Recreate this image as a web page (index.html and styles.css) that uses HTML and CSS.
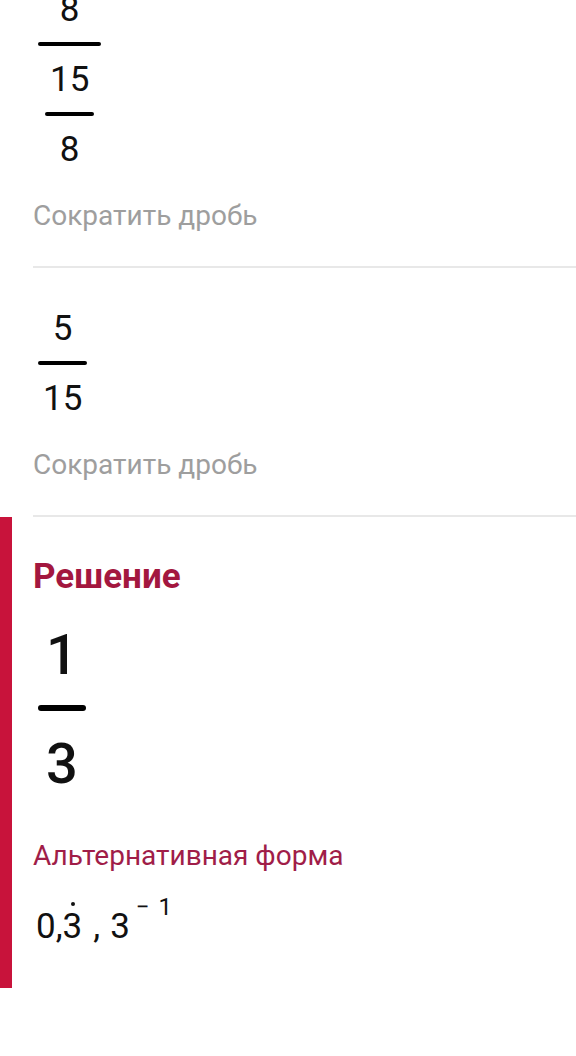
FILE: index.html
```html
<!DOCTYPE html>
<html lang="ru">
<head>
  <meta charset="UTF-8" />
  <meta name="viewport" content="width=device-width, initial-scale=1.0" />
  <title>Решение</title>
  <link rel="stylesheet" href="styles.css">
</head>
<body>
  <div id="feed">
    <!-- Step: (5/8) / (15/8) -->
    <div class="step">
      <div class="expr">
        <span class="frac">
          <span class="num">
            <span class="frac">
              <span class="num">5</span>
              <span class="bar"></span>
              <span class="den">8</span>
            </span>
          </span>
          <span class="bar"></span>
          <span class="den">
            <span class="frac">
              <span class="num">15</span>
              <span class="bar"></span>
              <span class="den">8</span>
            </span>
          </span>
        </span>
      </div>
      <p class="caption">Сократить дробь</p>
    </div>

    <!-- Step: 5/15 -->
    <div class="step">
      <div class="expr">
        <span class="frac">
          <span class="num">5</span>
          <span class="bar"></span>
          <span class="den">15</span>
        </span>
      </div>
      <p class="caption">Сократить дробь</p>
    </div>

    <!-- Solution -->
    <div class="solution">
      <h2>Решение</h2>
      <div class="expr">
        <span class="frac big">
          <span class="num">1</span>
          <span class="bar"></span>
          <span class="den">3</span>
        </span>
      </div>
      <p class="alt-title">Альтернативная форма</p>
      <div class="alt-value"><span>0,</span><span class="rep">3</span><span class="sep">,</span><span>3</span><sup class="pow"><span class="sign">−</span>1</sup></div>
    </div>
  </div>
</body>
</html>
```

FILE: styles.css
```css
body {
  margin: 0;
  background-color: #fff;
  font-family: Roboto, "Noto Sans", sans-serif;
  color: #111;
}

/* page is scrolled, first step is partly above the fold */
#feed {
  margin-top: -121px;
}

.step {
  margin-left: 33px;
  padding: 43px 0 34px;
  border-bottom: 2px solid #e8e8e8;
}

.expr {
  display: flex;
  padding-left: 5px;
  font-size: 35px;
}

/* fractions */
.frac {
  display: inline-flex;
  flex-direction: column;
  line-height: 1;
}

.frac .num,
.frac .den {
  display: flex;
  justify-content: center;
  padding: 0 5px;
}

.frac .frac {
  margin: 0 2px;
}

.frac .bar {
  height: 4px;
  margin: 15px 0 16px;
  border-radius: 2px;
  background-color: #000;
}

.frac.big {
  font-size: 56px;
  font-weight: 500;
}

.frac.big .num,
.frac.big .den {
  padding: 0 8px;
}

.frac.big .bar {
  height: 6px;
  margin: 22px 0 25px;
  border-radius: 3px;
}

.caption {
  margin: 33px 0 0;
  font-size: 28px;
  line-height: 32px;
  color: #9e9e9e;
}

/* solution block */
.solution {
  border-left: 12px solid #c8133b;
  padding: 41px 0 41px 21px;
}

.solution h2 {
  margin: 0;
  font-size: 35px;
  line-height: 38px;
  font-weight: 700;
  color: #a3173f;
}

.solution .expr {
  margin-top: 31px;
}

.alt-title {
  margin: 48px 0 0;
  font-size: 28px;
  line-height: 32px;
  color: #a01d48;
}

.alt-value {
  margin-top: 34px;
  padding-left: 3px;
  font-size: 35px;
  line-height: 41px;
}

.rep {
  position: relative;
  margin-right: 11px;
}

.rep::after {
  content: "";
  position: absolute;
  left: 55%;
  top: -4px;
  width: 4px;
  height: 4px;
  margin-left: -2px;
  border-radius: 50%;
  background-color: currentColor;
}

.sep {
  margin-right: 10px;
}

.pow {
  margin-left: 6px;
  font-size: 24px;
  line-height: 0;
  vertical-align: 23px;
}

.pow .sign {
  margin-right: 9px;
}
```
